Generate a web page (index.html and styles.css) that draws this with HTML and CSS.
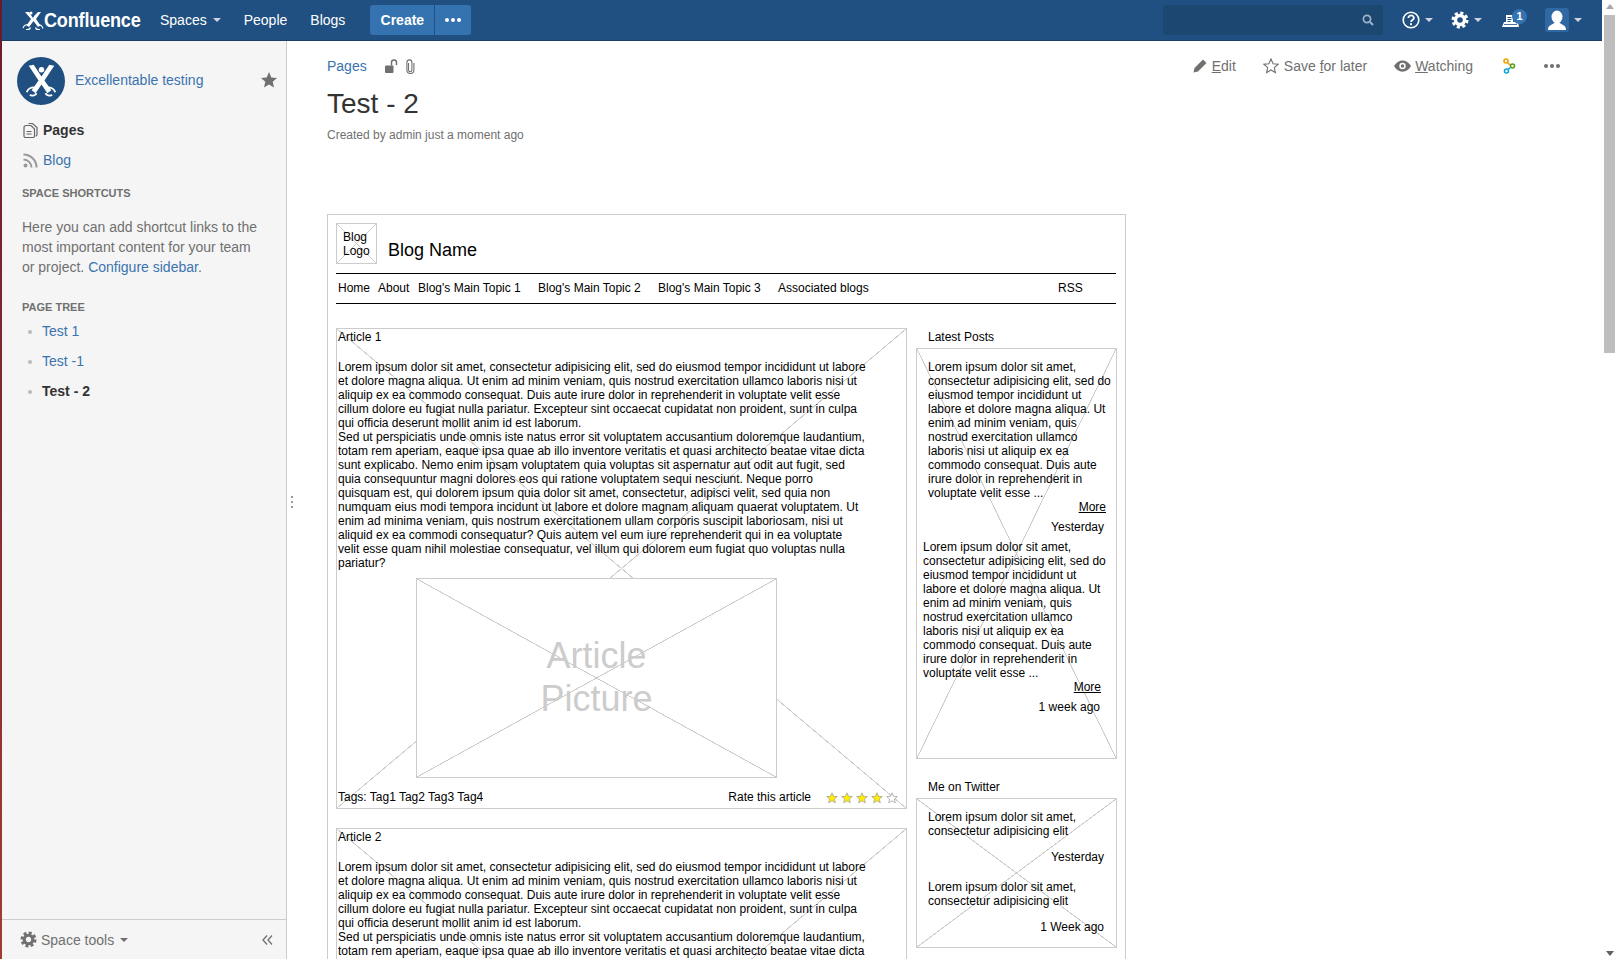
FILE: index.html
```html
<!DOCTYPE html>
<html lang="en">
<head>
<meta charset="utf-8">
<title>Test - 2 - Confluence</title>
<link rel="stylesheet" href="styles.css">
</head>
<body>
<div class="screen">
  <div class="strip"></div>
  <div class="app">
    <header class="topbar">
      <div class="brand">
        <svg class="brand-icon" viewBox="0 0 22 20" width="22" height="20"><path d="M3 2h4l4 6 1.500-2.500L16 2h3l-5 7 4.500 6.500-2.500 1.500-4.500-6-4.500 6-2.500-1.500L9 9z" fill="#fff"/><circle cx="9" cy="3" r="1.500" fill="#fff"/><path d="M1 18c1-3 3-3.500 5-3.500M21 18.500c-1-3-3-4-5-4M4 19.500c2 .5 4-.5 4.500-2M18 19.500c-2 .5-4-.5-4.500-2" fill="none" stroke="#fff" stroke-width="1.200"/></svg>
        <span class="brand-text">Confluence</span>
      </div>
      <nav class="topnav">
        <a class="topnav-item">Spaces<i class="caret"></i></a>
        <a class="topnav-item">People</a>
        <a class="topnav-item">Blogs</a>
      </nav>
      <div class="create-group">
        <a class="btn-create">Create</a>
        <a class="btn-more"><svg viewBox="0 0 16 4" width="16" height="4"><circle cx="2" cy="2" r="2"/><circle cx="8" cy="2" r="2"/><circle cx="14" cy="2" r="2"/></svg></a>
      </div>
      <div class="top-right">
        <div class="search">
          <svg viewBox="0 0 12 12" width="12" height="12"><circle cx="5" cy="5" r="3.600" fill="none" stroke="#9fb3c8" stroke-width="1.700"/><path d="M8 8l3 3" stroke="#9fb3c8" stroke-width="2"/></svg>
        </div>
        <a class="tool tool-help">
          <svg viewBox="0 0 18 18" width="18" height="18"><circle cx="9" cy="9" r="7.800" fill="none" stroke="#fff" stroke-width="1.600"/><path d="M6.300 7c0-3.400 5.600-3.400 5.600 0 0 2-2.900 2-2.900 4" fill="none" stroke="#fff" stroke-width="1.800"/><rect x="8" y="12.200" width="2" height="2" fill="#fff"/></svg>
          <i class="caret"></i>
        </a>
        <a class="tool tool-gear">
          <svg viewBox="0 0 18 18" width="18" height="18"><circle cx="9" cy="9" r="4.500" fill="none" stroke="#fff" stroke-width="3.400"/><circle cx="9" cy="9" r="7" fill="none" stroke="#fff" stroke-width="3" stroke-dasharray="3.100 2.400"/></svg>
          <i class="caret"></i>
        </a>
        <a class="tool tool-bell">
          <svg class="bell-icon" viewBox="0 0 17 12" width="17" height="12"><path d="M4 0h7v7h5l1 5H0l2-5h2z" fill="#fff"/><path d="M5.500 2.500h4M5.500 4.500h4M5.500 6.500h3" stroke="#205081" stroke-width="1"/><path d="M2 9.500h13" stroke="#205081" stroke-width=".8"/></svg>
          <span class="badge">1</span>
        </a>
        <a class="tool tool-user">
          <span class="avatar"><svg viewBox="0 0 24 24" width="24" height="24"><ellipse cx="12" cy="9" rx="5.500" ry="6.500" fill="#fff"/><path d="M3 22c0-5 4-5 6-7h6c2 2 6 2 6 7z" fill="#fff"/></svg></span>
          <i class="caret"></i>
        </a>
      </div>
    </header>

    <div class="body-row">
      <aside class="sidebar">
        <div class="space-head">
          <svg class="space-logo" viewBox="0 0 49 49" width="48" height="48"><circle cx="24.500" cy="24.500" r="24.500" fill="#205081"/><path d="M12 9l5-1 8 12 8-12 5 1-10 15 7 10-4 3-6-9-6 9-4-3 7-10z" fill="#fff"/><circle cx="25" cy="13" r="2.800" fill="#fff"/><path d="M10 36c1-4 5-5 8-5M39 36c-1-4-5-5-8-5M13 39c3 1 6 0 7-2M36 39c-3 1-6 0-7-2" fill="none" stroke="#fff" stroke-width="1.800"/></svg>
          <a class="space-name">Excellentable testing</a>
          <svg class="space-star" viewBox="0 0 16 16" width="16" height="16"><path d="M8 0l2.300 5.400 5.700.5-4.300 3.800 1.300 5.800L8 12.500l-5 3 1.300-5.800L0 5.900l5.700-.5z" fill="#707070"/></svg>
        </div>
        <a class="side-link side-link-active">
          <svg viewBox="0 0 15 16" width="15" height="16"><path d="M5.500 1.500h4l4.500 4v7a1.500 1.500 0 0 1-1.500 1.500M3 3.500h5l3.500 3.500v7a1.500 1.500 0 0 1-1.500 1.500H2.500A1.500 1.500 0 0 1 1 14V5.500a2 2 0 0 1 2-2zM3.500 9.500h5M3.500 12h5" fill="none" stroke="#666" stroke-width="1.200"/></svg>
          Pages
        </a>
        <a class="side-link">
          <svg viewBox="0 0 15 15" width="15" height="15"><circle cx="2.500" cy="12.500" r="2" fill="#999"/><path d="M.5 6.500a8 8 0 0 1 8 8M.5 1.500a13 13 0 0 1 13 13" fill="none" stroke="#999" stroke-width="2"/></svg>
          Blog
        </a>
        <h5 class="side-heading side-heading-shortcuts">Space shortcuts</h5>
        <p class="side-text">Here you can add shortcut links to the most important content for your team or project. <a class="side-a">Configure sidebar</a>.</p>
        <h5 class="side-heading side-heading-tree">Page tree</h5>
        <ul class="tree">
          <li><a class="side-a">Test 1</a></li>
          <li><a class="side-a">Test -1</a></li>
          <li class="tree-current">Test - 2</li>
        </ul>
        <div class="side-foot">
          <svg viewBox="0 0 18 18" width="17" height="17"><circle cx="9" cy="9" r="4.500" fill="none" stroke="#707070" stroke-width="3.400"/><circle cx="9" cy="9" r="7" fill="none" stroke="#707070" stroke-width="3" stroke-dasharray="3.100 2.400"/></svg>
          <span class="side-tools">Space tools<i class="caret caret-dark"></i></span>
          <svg class="collapse" viewBox="0 0 11 10" width="11" height="10"><path d="M5 0.500L1 5l4 4.500M10 0.500L6 5l4 4.500" fill="none" stroke="#707070" stroke-width="1.300"/></svg>
        </div>
      </aside>
      <div class="grip"><i></i><i></i><i></i></div>

      <main class="main">
        <div class="pagebar">
          <a class="crumb">Pages</a>
          <svg class="lock" viewBox="0 0 13 14" width="13" height="14"><rect x="0" y="6.500" width="8.500" height="7.500" rx="1" fill="#707070"/><path d="M6.500 6.500V3.500a2.500 2.500 0 0 1 5 0V6" fill="none" stroke="#707070" stroke-width="1.500"/></svg>
          <svg class="clip" viewBox="0 0 10 15" width="10" height="15"><path d="M3.500 4v7a1.700 1.700 0 0 0 3.400 0V3.500a2.500 2.500 0 0 0-5-.2V11a3.500 3.500 0 0 0 7 0V4" fill="none" stroke="#707070" stroke-width="1.100"/></svg>
          <div class="actions">
            <a class="action action-edit"><svg viewBox="0 0 14 14" width="14" height="14"><path d="M10 0.500l3.500 3.500L5 12.500 0.500 13.500 1.500 9z" fill="#707070"/></svg><span><u>E</u>dit</span></a>
            <a class="action action-save"><svg viewBox="0 0 16 16" width="16" height="16"><path d="M8 1l2.100 4.700 5 .5-3.800 3.400 1.100 5L8 12l-4.400 2.600 1.100-5L.9 6.200l5-.5z" fill="none" stroke="#707070" stroke-width="1.100"/></svg><span>Save <u>f</u>or later</span></a>
            <a class="action action-watch"><svg viewBox="0 0 17 12" width="17" height="12"><path d="M0 6c4-7.500 13-7.500 17 0-4 7.500-13 7.500-17 0z" fill="#707070"/><circle cx="8.500" cy="6" r="3.200" fill="#fff"/><circle cx="8.500" cy="6" r="1.700" fill="#707070"/></svg><span><u>W</u>atching</span></a>
            <svg class="action-link" viewBox="0 0 13 16" width="13" height="16"><circle cx="3" cy="3" r="2" fill="none" stroke="#f5a000" stroke-width="1.600"/><path d="M4.500 4.500L7 7" stroke="#f5a000" stroke-width="1.600"/><circle cx="9.500" cy="8" r="2" fill="none" stroke="#5c9e1a" stroke-width="1.600"/><circle cx="3.500" cy="13" r="2" fill="none" stroke="#0fa3d6" stroke-width="1.600"/><path d="M5 11.500L7.500 9.500" stroke="#0fa3d6" stroke-width="1.600"/></svg>
            <svg class="action-dots" viewBox="0 0 16 4" width="16" height="4"><circle cx="2" cy="2" r="2"/><circle cx="8" cy="2" r="2"/><circle cx="14" cy="2" r="2"/></svg>
          </div>
        </div>
        <h1 class="title">Test - 2</h1>
        <p class="byline">Created by admin just a moment ago</p>

        <section class="wire">
          <div class="wire-head">
            <div class="blog-logo x">Blog<br>Logo</div>
            <div class="blog-name">Blog Name</div>
          </div>
          <nav class="wire-nav">
            <span>Home</span><span>About</span><span>Blog's Main Topic 1</span><span>Blog's Main Topic 2</span><span>Blog's Main Topic 3</span><span>Associated blogs</span><span>RSS</span>
          </nav>
          <div class="wire-cols">
            <div class="articles">
              <article class="article x">
                <div class="article-title">Article 1</div>
                <div class="article-text">
                  <p>Lorem ipsum dolor sit amet, consectetur adipisicing elit, sed do eiusmod tempor incididunt ut labore et dolore magna aliqua. Ut enim ad minim veniam, quis nostrud exercitation ullamco laboris nisi ut aliquip ex ea commodo consequat. Duis aute irure dolor in reprehenderit in voluptate velit esse cillum dolore eu fugiat nulla pariatur. Excepteur sint occaecat cupidatat non proident, sunt in culpa qui officia deserunt mollit anim id est laborum.</p>
                  <p>Sed ut perspiciatis unde omnis iste natus error sit voluptatem accusantium doloremque laudantium, totam rem aperiam, eaque ipsa quae ab illo inventore veritatis et quasi architecto beatae vitae dicta sunt explicabo. Nemo enim ipsam voluptatem quia voluptas sit aspernatur aut odit aut fugit, sed quia consequuntur magni dolores eos qui ratione voluptatem sequi nesciunt. Neque porro quisquam est, qui dolorem ipsum quia dolor sit amet, consectetur, adipisci velit, sed quia non numquam eius modi tempora incidunt ut labore et dolore magnam aliquam quaerat voluptatem. Ut enim ad minima veniam, quis nostrum exercitationem ullam corporis suscipit laboriosam, nisi ut aliquid ex ea commodi consequatur? Quis autem vel eum iure reprehenderit qui in ea voluptate velit esse quam nihil molestiae consequatur, vel illum qui dolorem eum fugiat quo voluptas nulla pariatur?</p>
                </div>
                <div class="picture x"><span>Article<br>Picture</span></div>
                <div class="article-foot">
                  <span>Tags: Tag1 Tag2 Tag3 Tag4</span>
                  <span class="rate">Rate this article</span>
                  <span class="stars">
                    <svg viewBox="0 0 12 12" width="12" height="12"><path class="star-on" d="M6 .8l1.500 3.500 3.800.3-2.900 2.500.9 3.700L6 8.800l-3.300 2 .9-3.700L.7 4.600l3.800-.3z"/></svg>
                    <svg viewBox="0 0 12 12" width="12" height="12"><path class="star-on" d="M6 .8l1.500 3.500 3.800.3-2.900 2.500.9 3.700L6 8.800l-3.300 2 .9-3.700L.7 4.600l3.800-.3z"/></svg>
                    <svg viewBox="0 0 12 12" width="12" height="12"><path class="star-on" d="M6 .8l1.500 3.500 3.800.3-2.900 2.500.9 3.700L6 8.800l-3.300 2 .9-3.700L.7 4.600l3.800-.3z"/></svg>
                    <svg viewBox="0 0 12 12" width="12" height="12"><path class="star-on" d="M6 .8l1.500 3.500 3.800.3-2.900 2.500.9 3.700L6 8.800l-3.300 2 .9-3.700L.7 4.600l3.800-.3z"/></svg>
                    <svg viewBox="0 0 12 12" width="12" height="12"><path class="star-off" d="M6 .8l1.500 3.500 3.800.3-2.900 2.500.9 3.700L6 8.800l-3.300 2 .9-3.700L.7 4.600l3.800-.3z"/></svg>
                  </span>
                </div>
              </article>
              <article class="article x">
                <div class="article-title">Article 2</div>
                <div class="article-text">
                  <p>Lorem ipsum dolor sit amet, consectetur adipisicing elit, sed do eiusmod tempor incididunt ut labore et dolore magna aliqua. Ut enim ad minim veniam, quis nostrud exercitation ullamco laboris nisi ut aliquip ex ea commodo consequat. Duis aute irure dolor in reprehenderit in voluptate velit esse cillum dolore eu fugiat nulla pariatur. Excepteur sint occaecat cupidatat non proident, sunt in culpa qui officia deserunt mollit anim id est laborum.</p>
                  <p>Sed ut perspiciatis unde omnis iste natus error sit voluptatem accusantium doloremque laudantium, totam rem aperiam, eaque ipsa quae ab illo inventore veritatis et quasi architecto beatae vitae dicta sunt explicabo. Nemo enim ipsam voluptatem quia voluptas sit aspernatur aut odit aut fugit, sed quia consequuntur magni dolores eos qui ratione voluptatem sequi nesciunt. Neque porro quisquam est, qui dolorem ipsum quia dolor sit amet, consectetur, adipisci velit, sed quia non numquam eius modi tempora incidunt ut labore et dolore magnam aliquam quaerat voluptatem.</p>
                </div>
              </article>
            </div>
            <div class="rail">
              <div class="rail-title">Latest Posts</div>
              <div class="rail-box rail-box-posts x">
                <div class="post post-first">
                  <p>Lorem ipsum dolor sit amet, consectetur adipisicing elit, sed do eiusmod tempor incididunt ut labore et dolore magna aliqua. Ut enim ad minim veniam, quis nostrud exercitation ullamco laboris nisi ut aliquip ex ea commodo consequat. Duis aute irure dolor in reprehenderit in voluptate velit esse ...</p>
                  <div class="more">More</div>
                  <div class="when">Yesterday</div>
                </div>
                <div class="post post-second">
                  <p>Lorem ipsum dolor sit amet, consectetur adipisicing elit, sed do eiusmod tempor incididunt ut labore et dolore magna aliqua. Ut enim ad minim veniam, quis nostrud exercitation ullamco laboris nisi ut aliquip ex ea commodo consequat. Duis aute irure dolor in reprehenderit in voluptate velit esse ...</p>
                  <div class="more">More</div>
                  <div class="when">1 week ago</div>
                </div>
              </div>
              <div class="rail-title rail-title-twitter">Me on Twitter</div>
              <div class="rail-box rail-box-twitter x">
                <p class="tweet">Lorem ipsum dolor sit amet, consectetur adipisicing elit</p>
                <div class="tweet-when">Yesterday</div>
                <p class="tweet tweet-next">Lorem ipsum dolor sit amet, consectetur adipisicing elit</p>
                <div class="tweet-when">1 Week ago</div>
              </div>
            </div>
          </div>
        </section>
      </main>
    </div>
  </div>
  <div class="scrollbar">
    <i class="sb-up"></i>
    <div class="sb-thumb"></div>
    <i class="sb-down"></i>
  </div>
</div>
</body>
</html>
```
FILE: styles.css
```css
* { box-sizing: border-box; }
html, body { margin: 0; height: 100%; overflow: hidden; }
body { font-family: "Liberation Sans", Arial, sans-serif; font-size: 14px; color: #333; background: #fff; }
p, h1, h5, ul { margin: 0; padding: 0; }
a { cursor: pointer; }
svg { display: block; flex: none; }

.screen { display: flex; height: 959px; width: 1616px; }
.strip { width: 2px; flex: none; background: linear-gradient(#6b1a2c, #a33a34); }
.app { flex: 1; min-width: 0; display: flex; flex-direction: column; }

/* top bar */
.topbar { height: 41px; flex: none; background: #205081; border-bottom: 1px solid #1a3f66; display: flex; align-items: center; color: #fff; padding-left: 20px; }
.brand { display: flex; align-items: center; width: 138px; }
.brand-icon { margin-right: 0; }
.brand-text { font-weight: 700; font-size: 21px; letter-spacing: -.2px; line-height: 24px; transform: scaleX(.86); transform-origin: 0 50%; }
.topnav { display: flex; }
.topnav-item { display: flex; align-items: center; margin-right: 23px; line-height: 20px; }
.topnav-item:last-child { margin-right: 25px; }
.caret { display: inline-block; width: 0; height: 0; border: 4px solid transparent; border-top-color: #ccd6e2; border-bottom: 0; margin-left: 6px; }
.caret-dark { border-top-color: #707070; }
.create-group { display: flex; height: 30px; }
.btn-create { width: 64px; background: #3572b0; border-radius: 3px 0 0 3px; font-weight: 700; text-align: center; line-height: 30px; }
.btn-more { width: 36px; margin-left: 1px; background: #3572b0; border-radius: 0 3px 3px 0; display: flex; align-items: center; justify-content: center; fill: #fff; }
.top-right { margin-left: auto; display: flex; align-items: center; }
.search { width: 220px; height: 30px; background: #1c4771; border-radius: 3px; display: flex; align-items: center; justify-content: flex-end; padding-right: 9px; margin-right: 19px; }
.tool { display: flex; align-items: center; position: relative; }
.tool-help { margin-right: 18px; }
.tool-gear { margin-right: 20px; }
.tool-gear .caret, .tool-help .caret { margin-left: 5px; }
.tool-bell { margin-right: 13px; width: 30px; }
.bell-icon { margin-top: 2px; }
.badge { position: absolute; left: 10px; top: -4px; width: 15px; height: 15px; border-radius: 50%; background: #3572b0; color: #fff; font-size: 11px; font-weight: 700; line-height: 15px; text-align: center; }
.avatar { width: 24px; height: 24px; background: #2f68a3; border-radius: 3px; }
.tool-user { margin-right: 20px; }
.tool-user .caret { margin-left: 5px; }

/* layout */
.body-row { flex: 1; min-height: 0; display: flex; }

/* sidebar */
.sidebar { width: 285px; flex: none; background: #f5f5f5; border-right: 1px solid #ccc; display: flex; flex-direction: column; padding-top: 14px; }
.space-head { display: flex; align-items: center; padding-left: 15px; height: 49px; margin-bottom: 11px; }
.space-logo { margin-top: 2px; }
.space-name { margin-left: 10px; color: #3b73af; }
.space-star { margin-left: auto; margin-right: 9px; }
.side-link { display: flex; align-items: center; gap: 5px; height: 30px; padding-left: 21px; color: #3b73af; }
.side-link-active { font-weight: 700; color: #333; }
.side-heading { font-size: 11px; font-weight: 700; text-transform: uppercase; color: #707070; line-height: 14px; padding-left: 20px; }
.side-heading-shortcuts { margin-top: 11px; }
.side-text { padding: 0 20px; margin-top: 17px; line-height: 20px; color: #707070; }
.side-a { color: #3b73af; }
.side-heading-tree { margin-top: 23px; }
.tree { list-style: none; margin-top: 2px; padding-left: 40px; }
.tree li { height: 30px; line-height: 30px; position: relative; }
.tree li::before { content: ""; position: absolute; left: -14px; top: 14px; width: 4px; height: 4px; border-radius: 50%; background: #bbb; }
.tree-current { font-weight: 700; }
.side-foot { margin-top: auto; height: 40px; border-top: 1px solid #ccc; display: flex; align-items: center; padding: 0 13px 0 18px; color: #707070; }
.side-tools { margin-left: 4px; display: flex; align-items: center; }
.collapse { margin-left: auto; }
.grip { width: 10px; flex: none; display: flex; flex-direction: column; align-items: center; justify-content: center; gap: 3px; padding-top: 4px; }
.grip i { width: 2px; height: 2px; background: #999; }

/* main */
.main { flex: 1; min-width: 0; padding: 15px 42px 0 30px; overflow: hidden; }
.pagebar { display: flex; align-items: center; height: 20px; }
.crumb { color: #3b73af; }
.lock { margin-left: 18px; }
.clip { margin-left: 7px; }
.actions { margin-left: auto; display: flex; align-items: center; color: #707070; fill: #707070; }
.action { display: flex; align-items: center; }
.action-edit svg { margin-right: 5px; }
.action-save svg { margin-right: 5px; }
.action-watch svg { margin-right: 4px; }
.action-edit { margin-right: 27px; }
.action-save { margin-right: 27px; }
.action-watch { margin-right: 30px; }
.action-dots { margin-left: 28px; }
.title { font-size: 28px; font-weight: 400; line-height: 32px; margin-top: 12px; color: #333; }
.byline { font-size: 12px; line-height: 16px; margin-top: 7px; color: #707070; }

/* wireframe */
.x { background-image: linear-gradient(to top right, transparent calc(50% - .6px), #ccc calc(50% - .4px), #ccc calc(50% + .4px), transparent calc(50% + .6px)), linear-gradient(to bottom right, transparent calc(50% - .6px), #ccc calc(50% - .4px), #ccc calc(50% + .4px), transparent calc(50% + .6px)); }
.wire { width: 799px; margin-top: 71px; border: 1px solid #ccc; padding: 8px 9px 0 8px; font-size: 12px; line-height: 14px; color: #000; height: 900px; }
.wire-head { display: flex; align-items: center; height: 41px; }
.blog-logo { width: 41px; height: 41px; border: 1px solid #ccc; text-align: left; padding: 6px 0 0 6px; }
.blog-name { font-size: 18px; line-height: 22px; margin-left: 11px; margin-top: 13px; }
.wire-nav { margin-top: 9px; height: 31px; border-top: 1px solid #000; border-bottom: 1px solid #000; display: grid; grid-template-columns: 40px 40px 120px 120px 120px 280px auto; align-items: center; padding: 0 0 2px 2px; }
.wire-cols { display: flex; margin-top: 24px; }
.articles { width: 571px; flex: none; }
.article { border: 1px solid #ccc; padding: 1px 0 3px 1px; height: 481px; margin-bottom: 19px; background-color: #fff; }
.article-title { margin-bottom: 16px; }
.article-text { width: 528.5px; }
.picture { width: 361px; height: 200px; margin: 8px 0 0 78px; padding-bottom: 2px; border: 1px solid #ccc; background-color: #fff; display: flex; align-items: center; justify-content: center; text-align: center; color: #ccc; font-size: 36px; line-height: 43px; }
.article-foot { display: flex; margin-top: 12px; }
.rate { margin-left: auto; margin-right: 15px; }
.stars { display: flex; gap: 3px; margin-right: 8px; margin-top: 2px; }
.star-on { fill: #ffee00; stroke: #999; stroke-width: .7; }
.star-off { fill: #fff; stroke: #999; stroke-width: .7; }

.rail { width: 201px; margin-left: 9px; flex: none; }
.rail-title { padding: 2px 0 0 12px; height: 20px; }
.rail-title-twitter { margin-top: 19px; padding-top: 2px; }
.rail-box { border: 1px solid #ccc; }
.rail-box-posts { height: 411px; padding-top: 11px; }
.post-first { padding-left: 11px; }
.post-first p { width: 186px; }
.post-first .more { padding-right: 10px; }
.post-first .when { padding-right: 12px; }
.post-second { padding-left: 6px; margin-top: 6px; }
.post-second p { width: 186px; }
.post-second .more { padding-right: 15px; }
.post-second .when { padding-right: 16px; margin-top: 6px; }
.more { text-align: right; text-decoration: underline; }
.when { text-align: right; margin-top: 6px; }
.rail-box-twitter { height: 150px; padding-top: 11px; }
.tweet { padding-left: 11px; width: 186px; }
.tweet-next { margin-top: 16px; }
.tweet-when { text-align: right; padding-right: 12px; margin-top: 12px; }

/* scrollbar */
.scrollbar { width: 14px; flex: none; background: #fff; display: flex; flex-direction: column; align-items: flex-end; position: relative; }
.sb-thumb { width: 11px; height: 338px; background: #bebebe; margin-right: 1px; margin-top: 15px; }
.sb-up, .sb-down { position: absolute; right: 2px; width: 0; height: 0; border: 4px solid transparent; }
.sb-up { top: 4px; border-top: 0; border-bottom: 5px solid #a8a8a8; }
.sb-down { bottom: 3px; border-bottom: 0; border-top: 5px solid #606060; }
```
